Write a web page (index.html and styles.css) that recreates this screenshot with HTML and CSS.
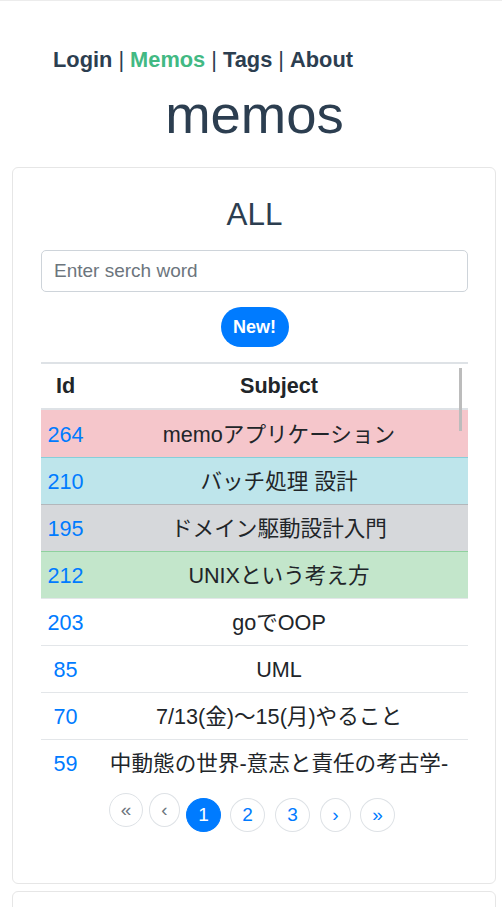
FILE: index.html
```html
<!DOCTYPE html>
<html lang="ja">
<head>
<meta charset="utf-8">
<title>memos</title>
<link rel="stylesheet" href="styles.css">
</head>
<body>
<div class="page">
  <nav class="nav">
    <a class="nav-link" href="#">Login</a> | <a class="nav-link active" href="#">Memos</a> | <a class="nav-link" href="#">Tags</a> | <a class="nav-link" href="#">About</a>
  </nav>
  <h1 class="title">memos</h1>

  <section class="card">
    <h2 class="card-title">ALL</h2>
    <input class="search" type="text" placeholder="Enter serch word">
    <div class="btn-row"><button class="btn-new">New!</button></div>

    <div class="table-scroll">
      <table class="memo-table">
        <colgroup><col class="col-id"><col class="col-subject"></colgroup>
        <thead>
          <tr><th>Id</th><th>Subject</th></tr>
        </thead>
        <tbody>
          <tr class="row-danger first"><td class="id">264</td><td>memoアプリケーション</td></tr>
          <tr class="row-info"><td class="id">210</td><td>バッチ処理 設計</td></tr>
          <tr class="row-secondary"><td class="id">195</td><td>ドメイン駆動設計入門</td></tr>
          <tr class="row-success"><td class="id">212</td><td>UNIXという考え方</td></tr>
          <tr><td class="id">203</td><td>goでOOP</td></tr>
          <tr><td class="id">85</td><td>UML</td></tr>
          <tr><td class="id">70</td><td>7/13(金)～15(月)やること</td></tr>
          <tr><td class="id">59</td><td>中動態の世界-意志と責任の考古学-</td></tr>
        </tbody>
      </table>
      <div class="scroll-thumb"></div>
    </div>

    <ul class="pagination">
      <li class="page-item disabled first-link">«</li>
      <li class="page-item disabled prev-link">‹</li>
      <li class="page-item active num">1</li>
      <li class="page-item num">2</li>
      <li class="page-item num">3</li>
      <li class="page-item next-link">›</li>
      <li class="page-item last-link">»</li>
    </ul>
  </section>

  <section class="card card-next"></section>
</div>
</body>
</html>
```

FILE: styles.css
```css
html, body {
  margin: 0;
  padding: 0;
  overflow: hidden;
  background: #fff;
}

.page {
  font-family: "Liberation Sans", Arial, "Noto Sans CJK JP", sans-serif;
  color: #2c3e50;
  border-top: 1px solid #ececec;
  height: 906px;
}

.nav {
  padding: 46px 0 0 53px;
  font-size: 21.8px;
  line-height: 26px;
  color: #2c3e50;
}

.nav-link {
  font-weight: bold;
  color: #2c3e50;
  text-decoration: none;
}

.nav-link.active {
  color: #42b983;
}

.title {
  margin: 9px 0 0;
  padding-left: 7px;
  text-align: center;
  font-size: 54.5px;
  line-height: 65px;
  font-weight: normal;
  color: #2c3e50;
}

.card {
  margin: 20px 6px 0 12px;
  border: 1px solid #e6e6e6;
  border-radius: 6px;
  padding: 28px 27px 0 28px;
  height: 687px;
}

.card-title {
  margin: 0;
  text-align: center;
  font-size: 31.4px;
  line-height: 37px;
  font-weight: normal;
  color: #2c3e50;
}

.search {
  display: block;
  box-sizing: border-box;
  width: 100%;
  height: 42px;
  margin-top: 17px;
  padding: 0 12px;
  border: 1px solid #ced4da;
  border-radius: 5px;
  font-family: inherit;
  font-size: 19px;
  color: #495057;
}

.search::placeholder {
  color: #6c757d;
}

.btn-row {
  display: flex;
  justify-content: center;
  margin-top: 15px;
}

.btn-new {
  width: 68px;
  height: 40px;
  border: none;
  border-radius: 20px;
  background: #007bff;
  color: #fff;
  font-family: inherit;
  font-size: 18px;
  font-weight: bold;
  padding: 0;
}

.table-scroll {
  position: relative;
  margin-top: 15px;
  height: 411px;
  overflow: hidden;
}

.memo-table {
  width: 100%;
  table-layout: fixed;
  border-collapse: separate;
  border-spacing: 0;
  font-size: 21.6px;
  line-height: 24px;
  color: #212529;
}

.col-id { width: 49px; }

.memo-table th {
  font-weight: bold;
  padding: 10px 0;
  border-top: 2px solid #dee2e6;
  border-bottom: 2px solid #dee2e6;
  text-align: center;
}

.memo-table td {
  padding: 12px 0 10px;
  border-top: 1px solid #e3e6e9;
  text-align: center;
  white-space: nowrap;
}

.memo-table tr.first td {
  border-top: none;
  padding-top: 13px;
}

.memo-table td.id {
  color: #007bff;
}

.row-danger td { background: #f5c6cb; }
.row-info td { background: #bee5eb; border-top-color: #86cfda; }
.row-secondary td { background: #d6d8db; border-top-color: #b3b7bb; }
.row-success td { background: #c3e6cb; border-top-color: #8fd19e; }

.scroll-thumb {
  position: absolute;
  left: 418px;
  top: 6px;
  width: 3px;
  height: 63px;
  background: #bcbcbc;
}

.pagination {
  list-style: none;
  margin: 20px 0 0;
  padding: 0 5px 0 0;
  display: flex;
  justify-content: center;
  align-items: flex-start;
}

.page-item {
  box-sizing: border-box;
  width: 35px;
  height: 34px;
  margin-top: 5px;
  border: 1px solid #dee2e6;
  border-radius: 50%;
  display: flex;
  align-items: center;
  justify-content: center;
  font-size: 19px;
  color: #007bff;
}

.page-item.disabled {
  margin-top: 0;
  color: #6c757d;
}

.first-link { width: 34px; margin-right: 6px; }
.prev-link { width: 31px; margin-right: 6px; }
.num { margin-right: 9px; }
.num + .num { margin-right: 10px; }
.num + .num + .num { margin-right: 10px; }
.next-link { width: 31px; margin-right: 9px; }

.page-item.active {
  background: #007bff;
  border-color: #007bff;
  color: #fff;
}

.card-next {
  margin-top: 7px;
  height: 100px;
}
```
